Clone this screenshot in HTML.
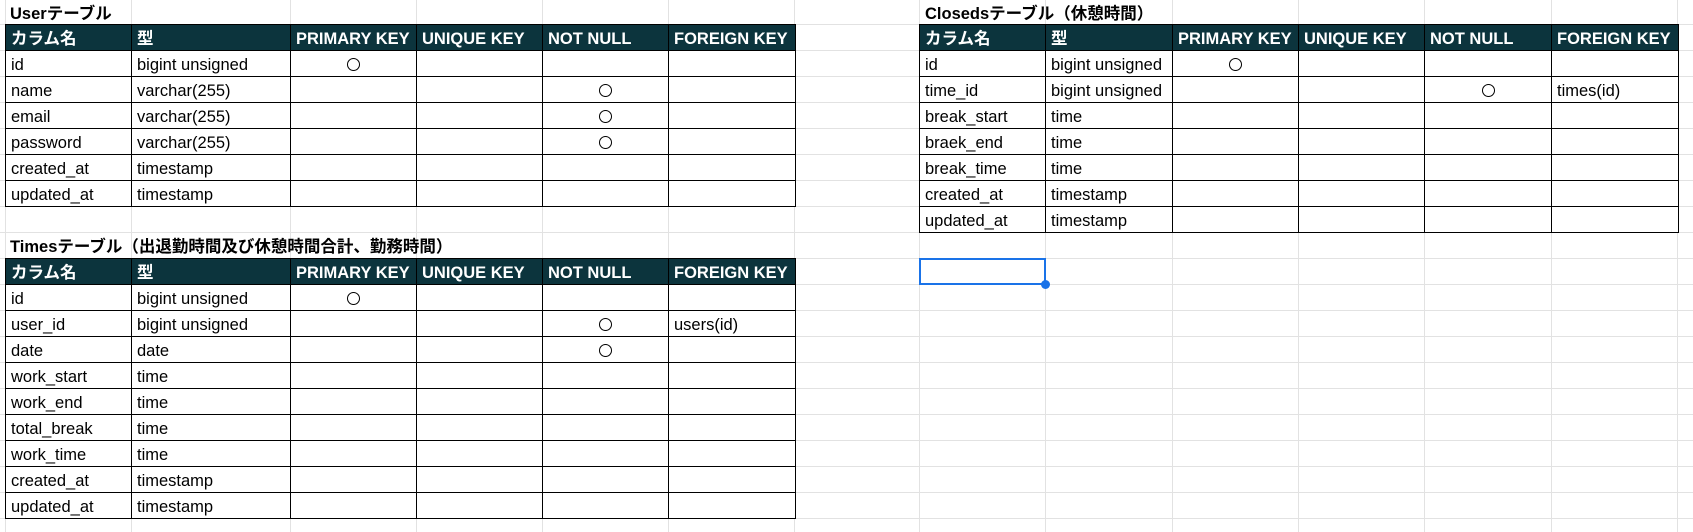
<!DOCTYPE html>
<html><head><meta charset="utf-8">
<style>
body{margin:0;width:1693px;height:532px;overflow:hidden;background:#fff;position:relative;font-family:"Liberation Sans","Noto Sans CJK JP",sans-serif;font-size:16.5px;color:#000}
.gv{position:absolute;top:0;height:532px;width:1px;background:#e2e2e2}
.gh{position:absolute;left:0;width:1693px;height:1px;background:#e2e2e2}
table{position:absolute;border-collapse:collapse;table-layout:fixed;background:#fff}
tr{height:26px}
td{border:1px solid #000;height:26px;padding:4px 0 0 5px;box-sizing:border-box;white-space:nowrap;overflow:hidden;line-height:20px;vertical-align:top}
tr.h td{background:#0c343d;color:#fff;font-weight:bold;padding-top:4px;font-size:16.5px}
td.c{text-align:center;padding-left:0}
.o{display:inline-block;width:11px;height:11px;border:1.4px solid #000;border-radius:50%;margin-top:3px}
.t{position:absolute;font-weight:bold;line-height:24px;font-size:16.5px}
.sel{position:absolute;left:919px;top:258px;width:127px;height:27px;box-sizing:border-box;border:2px solid #1a73e8}
.dot{position:absolute;left:1041px;top:280px;width:9px;height:9px;border-radius:50%;background:#1a73e8}
</style></head><body>
<div class="gv" style="left:5px"></div><div class="gv" style="left:131px"></div><div class="gv" style="left:290px"></div><div class="gv" style="left:416px"></div><div class="gv" style="left:542px"></div><div class="gv" style="left:668px"></div><div class="gv" style="left:794px"></div><div class="gv" style="left:919px"></div><div class="gv" style="left:1045px"></div><div class="gv" style="left:1172px"></div><div class="gv" style="left:1298px"></div><div class="gv" style="left:1424px"></div><div class="gv" style="left:1551px"></div><div class="gv" style="left:1677px"></div>
<div class="gh" style="top:24px"></div><div class="gh" style="top:50px"></div><div class="gh" style="top:76px"></div><div class="gh" style="top:102px"></div><div class="gh" style="top:128px"></div><div class="gh" style="top:154px"></div><div class="gh" style="top:180px"></div><div class="gh" style="top:206px"></div><div class="gh" style="top:232px"></div><div class="gh" style="top:258px"></div><div class="gh" style="top:284px"></div><div class="gh" style="top:310px"></div><div class="gh" style="top:336px"></div><div class="gh" style="top:362px"></div><div class="gh" style="top:388px"></div><div class="gh" style="top:414px"></div><div class="gh" style="top:440px"></div><div class="gh" style="top:466px"></div><div class="gh" style="top:492px"></div><div class="gh" style="top:518px"></div>

<div class="t" style="left:10px;top:2px">Userテーブル</div>
<table style="left:5px;top:24px;width:790px">
<col style="width:126px"><col style="width:159px"><col style="width:126px"><col style="width:126px"><col style="width:126px"><col style="width:127px">
<tr class="h"><td>カラム名</td><td>型</td><td>PRIMARY KEY</td><td>UNIQUE KEY</td><td>NOT NULL</td><td>FOREIGN KEY</td></tr>
<tr><td>id</td><td>bigint unsigned</td><td class="c"><span class="o"></span></td><td></td><td></td><td></td></tr>
<tr><td>name</td><td>varchar(255)</td><td></td><td></td><td class="c"><span class="o"></span></td><td></td></tr>
<tr><td>email</td><td>varchar(255)</td><td></td><td></td><td class="c"><span class="o"></span></td><td></td></tr>
<tr><td>password</td><td>varchar(255)</td><td></td><td></td><td class="c"><span class="o"></span></td><td></td></tr>
<tr><td>created_at</td><td>timestamp</td><td></td><td></td><td></td><td></td></tr>
<tr><td>updated_at</td><td>timestamp</td><td></td><td></td><td></td><td></td></tr>
</table>

<div class="t" style="left:10px;top:235px">Timesテーブル（出退勤時間及び休憩時間合計、勤務時間）</div>
<table style="left:5px;top:258px;width:790px">
<col style="width:126px"><col style="width:159px"><col style="width:126px"><col style="width:126px"><col style="width:126px"><col style="width:127px">
<tr class="h"><td>カラム名</td><td>型</td><td>PRIMARY KEY</td><td>UNIQUE KEY</td><td>NOT NULL</td><td>FOREIGN KEY</td></tr>
<tr><td>id</td><td>bigint unsigned</td><td class="c"><span class="o"></span></td><td></td><td></td><td></td></tr>
<tr><td>user_id</td><td>bigint unsigned</td><td></td><td></td><td class="c"><span class="o"></span></td><td>users(id)</td></tr>
<tr><td>date</td><td>date</td><td></td><td></td><td class="c"><span class="o"></span></td><td></td></tr>
<tr><td>work_start</td><td>time</td><td></td><td></td><td></td><td></td></tr>
<tr><td>work_end</td><td>time</td><td></td><td></td><td></td><td></td></tr>
<tr><td>total_break</td><td>time</td><td></td><td></td><td></td><td></td></tr>
<tr><td>work_time</td><td>time</td><td></td><td></td><td></td><td></td></tr>
<tr><td>created_at</td><td>timestamp</td><td></td><td></td><td></td><td></td></tr>
<tr><td>updated_at</td><td>timestamp</td><td></td><td></td><td></td><td></td></tr>
</table>

<div class="t" style="left:925px;top:2px">Closedsテーブル（休憩時間）</div>
<table style="left:919px;top:24px;width:759px">
<col style="width:126px"><col style="width:127px"><col style="width:126px"><col style="width:126px"><col style="width:127px"><col style="width:127px">
<tr class="h"><td>カラム名</td><td>型</td><td>PRIMARY KEY</td><td>UNIQUE KEY</td><td>NOT NULL</td><td>FOREIGN KEY</td></tr>
<tr><td>id</td><td>bigint unsigned</td><td class="c"><span class="o"></span></td><td></td><td></td><td></td></tr>
<tr><td>time_id</td><td>bigint unsigned</td><td></td><td></td><td class="c"><span class="o"></span></td><td>times(id)</td></tr>
<tr><td>break_start</td><td>time</td><td></td><td></td><td></td><td></td></tr>
<tr><td>braek_end</td><td>time</td><td></td><td></td><td></td><td></td></tr>
<tr><td>break_time</td><td>time</td><td></td><td></td><td></td><td></td></tr>
<tr><td>created_at</td><td>timestamp</td><td></td><td></td><td></td><td></td></tr>
<tr><td>updated_at</td><td>timestamp</td><td></td><td></td><td></td><td></td></tr>
</table>

<div class="sel"></div><div class="dot"></div>
</body></html>
